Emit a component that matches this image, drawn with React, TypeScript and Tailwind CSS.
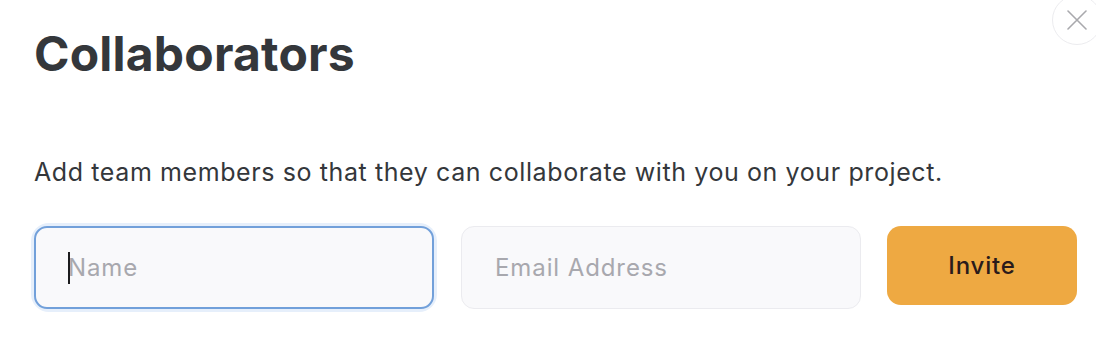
export default function App() {
  return (
    <div className="relative h-[345px] w-[1096px] overflow-hidden bg-white font-['Inter',sans-serif]">
      <button
        type="button"
        aria-label="Close"
        className="absolute left-[1052px] top-[-5px] flex h-[50px] w-[50px] items-center justify-center rounded-full border border-[#ececef] bg-white"
      >
        <svg width="20" height="20" viewBox="0 0 20 20" fill="none" stroke="#a9a9ad" strokeWidth="1.6" strokeLinecap="round">
          <path d="M1 1L19 19M19 1L1 19" />
        </svg>
      </button>

      <div className="pl-[34px] pt-[30px]">
        <h1 className="text-[48px] font-bold leading-[48px] tracking-[0.2px] text-[#34373b]">Collaborators</h1>

        <p className="mt-[78px] text-[25px] leading-[32px] tracking-[0.6px] text-[#34373b]">
          Add team members so that they can collaborate with you on your project.
        </p>

        <form className="mt-[38px] flex items-start" onSubmit={(e) => e.preventDefault()}>
          <div className="relative shrink-0 rounded-[15px] ring-[3px] ring-[#e6effb]">
            <input
              type="text"
              placeholder="Name"
              className="h-[83px] w-[400px] rounded-[13px] border-2 border-[#72a0da] bg-[#f9f9fb] px-[32px] text-[24px] tracking-[0.9px] text-[#34373b] caret-transparent outline-none placeholder:text-[#a8a8ae]"
            />
            <span className="absolute left-[34px] top-[26px] h-[32px] w-[2px] bg-[#1c1c1e]" />
          </div>
          <input
            type="email"
            placeholder="Email Address"
            className="ml-[27px] h-[83px] w-[400px] shrink-0 rounded-[13px] border border-[#ebebef] bg-[#f9f9fb] px-[33px] text-[24px] tracking-[0.9px] text-[#34373b] outline-none placeholder:text-[#a8a8ae]"
          />
          <button
            type="submit"
            className="ml-[26px] h-[79px] w-[190px] shrink-0 rounded-[14px] bg-[#eea942] text-[24px] font-medium tracking-[0.8px] text-[#2a1b1b]"
          >
            Invite
          </button>
        </form>
      </div>
    </div>
  );
}
